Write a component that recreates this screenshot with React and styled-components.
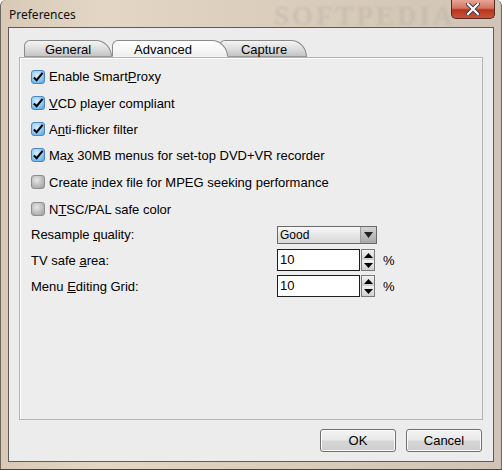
import React from 'react';
import styled, { createGlobalStyle } from 'styled-components';

const Global = createGlobalStyle`
	html, body {
		margin: 0;
		padding: 0;
		background: #ffffff;
	}
	body {
		font-family: 'Liberation Sans', Arial, sans-serif;
		font-size: 13px;
		color: #000;
	}
`;

const checks = [
	{ label: ['Enable Smart', 'P', 'roxy'], checked: true, h: 27 },
	{ label: ['', 'V', 'CD player compliant'], checked: true, h: 26 },
	{ label: ['A', 'n', 'ti-flicker filter'], checked: true, h: 26 },
	{ label: ['Ma', 'x', ' 30MB menus for set-top DVD+VR recorder'], checked: true, h: 26 },
	{ label: ['Create ', 'i', 'ndex file for MPEG seeking performance'], checked: false, h: 28 },
	{ label: ['N', 'T', 'SC/PAL safe color'], checked: false, h: 26 },
];

const Label = ({ parts }) => (
	<span>
		{parts[0]}
		<u>{parts[1]}</u>
		{parts[2]}
	</span>
);

const SpinControl = () => (
	<Spinner>
		<SpinInput>10</SpinInput>
		<SpinButtons>
			<SpinHalf>
				<svg width="9" height="5" viewBox="0 0 9 5">
					<path d="M0 5 H9 L4.5 0 Z" fill="#000" />
				</svg>
			</SpinHalf>
			<SpinHalf>
				<svg width="9" height="5" viewBox="0 0 9 5">
					<path d="M0 0 H9 L4.5 5 Z" fill="#000" />
				</svg>
			</SpinHalf>
		</SpinButtons>
	</Spinner>
);

const App = () => {
	return (
		<>
			<Global />
			<Window>
				<TitleBar>
					<Title>Preferences</Title>
					<Watermark>SOFTPEDIA</Watermark>
					<CloseButton>
						<svg width="14" height="12" viewBox="0 0 14 12">
							<path
								d="M2 1 L12 11 M12 1 L2 11"
								stroke="#3a3a4a"
								strokeWidth="4"
								strokeLinecap="round"
							/>
							<path
								d="M2 1 L12 11 M12 1 L2 11"
								stroke="#ffffff"
								strokeWidth="2.2"
								strokeLinecap="round"
							/>
						</svg>
					</CloseButton>
				</TitleBar>
				<Client>
					<TabRow>
						<Tab>General</Tab>
						<Tab $active>Advanced</Tab>
						<Tab $last>Capture</Tab>
					</TabRow>
					<Panel>
						{checks.map((c, i) => (
							<CheckRow key={i} $h={c.h}>
								<Box $checked={c.checked}>
									{c.checked && (
										<svg width="13" height="12" viewBox="0 0 13 12">
											<path
												d="M2 6.5 L5 9.5 L11.5 1.5"
												stroke="#000"
												strokeWidth="2.2"
												fill="none"
											/>
										</svg>
									)}
								</Box>
								<Label parts={c.label} />
							</CheckRow>
						))}
						<FieldRow $h={25}>
							<FieldLabel>
								Resample <u>q</u>uality:
							</FieldLabel>
							<Combo>
								<ComboText>Good</ComboText>
								<ComboButton>
									<svg width="9" height="6" viewBox="0 0 9 6">
										<path d="M0 0 H9 L4.5 6 Z" fill="#222" />
									</svg>
								</ComboButton>
							</Combo>
						</FieldRow>
						<FieldRow $h={26}>
							<FieldLabel>
								TV safe <u>a</u>rea:
							</FieldLabel>
							<SpinControl />
							<Percent>%</Percent>
						</FieldRow>
						<FieldRow $h={26}>
							<FieldLabel>
								Menu <u>E</u>diting Grid:
							</FieldLabel>
							<SpinControl />
							<Percent>%</Percent>
						</FieldRow>
					</Panel>
					<ButtonRow>
						<Button>OK</Button>
						<Button>Cancel</Button>
					</ButtonRow>
				</Client>
			</Window>
		</>
	);
};

const Window = styled.div`
	width: 502px;
	height: 470px;
	box-sizing: border-box;
	display: flex;
	flex-direction: column;
	padding: 0 7px 7px 7px;
	background: linear-gradient(90deg, #d8cab6 0%, #e3d6c5 20%, #d9ccbb 60%, #cfc4b6 100%);
	border-left: 1px solid #6e665c;
	border-right: 1px solid #6e665c;
	border-bottom: 1px solid #4a453f;
	border-radius: 6px 6px 0 0;
	overflow: hidden;
`;

const TitleBar = styled.div`
	height: 28px;
	position: relative;
	display: flex;
	align-items: center;
`;

const Title = styled.div`
	font-family: 'Noto Sans', 'Liberation Sans', sans-serif;
	font-size: 12px;
	color: #101010;
	padding-left: 1px;
	margin-top: 1px;
`;

const Watermark = styled.div`
	position: absolute;
	left: 266px;
	top: 1px;
	font-family: 'Liberation Serif', serif;
	font-weight: bold;
	font-size: 27px;
	letter-spacing: 3px;
	color: rgba(185, 175, 160, 0.4);
	filter: blur(1px);
`;

const CloseButton = styled.div`
	position: absolute;
	right: -1px;
	top: 0;
	width: 44px;
	height: 19px;
	box-sizing: border-box;
	border: 1px solid #5a2a22;
	border-top: none;
	border-radius: 0 0 5px 5px;
	background: linear-gradient(180deg, #e8a496 0%, #d2765f 45%, #b8341c 55%, #c9533a 100%);
	display: flex;
	align-items: center;
	justify-content: center;
`;

const Client = styled.div`
	flex: 1;
	display: flex;
	flex-direction: column;
	border: 1px solid #5c5c5c;
	background: #ececec;
	padding: 12px 10px 9px 10px;
`;

const TabRow = styled.div`
	display: flex;
	height: 17px;
	padding-left: 5px;
	align-items: flex-end;
`;

const Tab = styled.div`
	height: 17px;
	box-sizing: border-box;
	width: ${(p) => (p.$active ? '116px' : '88px')};
	margin-right: ${(p) => (p.$active ? '-9px' : '0')};
	position: relative;
	z-index: ${(p) => (p.$active ? 2 : 1)};
	padding: ${(p) => (p.$active ? '2px 14px 0 0' : p.$last ? '2px 0 0 2px' : '2px 0 0 0')};
	display: flex;
	align-items: center;
	justify-content: center;
	font-size: 13px;
	line-height: 13px;
	border: 1px solid #8a8a8a;
	border-bottom: ${(p) => (p.$active ? '1px solid #f4f4f4' : '1px solid #9a9a9a')};
	border-radius: 6px 16px 0 0 / 6px 17px 0 0;
	background: ${(p) =>
		p.$active
			? 'linear-gradient(180deg, #ffffff 0%, #f6f6f6 60%, #eeeeee 100%)'
			: 'linear-gradient(180deg, #f4f4f4 0%, #dcdcdc 55%, #c4c4c4 100%)'};
`;

const Panel = styled.div`
	height: 363px;
	box-sizing: border-box;
	border: 1px solid #b4b4b4;
	box-shadow: inset 1px 1px 0 #ffffff;
	background: #ededed;
	padding: 5px 10px 0 11px;
	display: flex;
	flex-direction: column;
`;

const CheckRow = styled.div`
	height: ${(p) => p.$h}px;
	display: flex;
	align-items: center;
	gap: 4px;
	white-space: nowrap;
`;

const Box = styled.div`
	width: 14px;
	height: 14px;
	box-sizing: border-box;
	border-radius: 3px;
	display: flex;
	align-items: center;
	justify-content: center;
	border: 1px solid ${(p) => (p.$checked ? '#4f84c4' : '#8e8e8e')};
	background: ${(p) =>
		p.$checked
			? 'radial-gradient(circle at 40% 35%, #d8f0ff 0%, #8ccaf4 55%, #4aa0e0 100%)'
			: 'radial-gradient(circle at 40% 35%, #e8e8e8 0%, #b8b8b8 60%, #9c9c9c 100%)'};
`;

const FieldRow = styled.div`
	height: ${(p) => p.$h}px;
	display: flex;
	align-items: center;
	white-space: nowrap;
`;

const FieldLabel = styled.div`
	width: 246px;
`;

const Combo = styled.div`
	width: 100px;
	height: 18px;
	box-sizing: border-box;
	border: 1px solid #6a6a6a;
	display: flex;
	background: linear-gradient(180deg, #f8f8f8 0%, #e6e6e6 50%, #d8d8d8 100%);
`;

const ComboText = styled.div`
	flex: 1;
	font-size: 12px;
	line-height: 16px;
	padding-left: 2px;
`;

const ComboButton = styled.div`
	width: 15px;
	display: flex;
	align-items: center;
	justify-content: center;
	border-left: 1px solid #9a9a9a;
	background: linear-gradient(180deg, #d4d4d4 0%, #a8a8a8 100%);
`;

const Spinner = styled.div`
	display: flex;
	height: 22px;
`;

const SpinInput = styled.div`
	width: 83px;
	box-sizing: border-box;
	border: 1px solid #1e1e1e;
	background: #ffffff;
	font-size: 13px;
	line-height: 20px;
	padding-left: 2px;
`;

const SpinButtons = styled.div`
	width: 14px;
	margin-left: 1px;
	display: flex;
	flex-direction: column;
	border: 1px solid #7a7a7a;
	box-sizing: border-box;
`;

const SpinHalf = styled.div`
	flex: 1;
	display: flex;
	align-items: center;
	justify-content: center;
	background: linear-gradient(180deg, #f2f2f2 0%, #cfcfcf 100%);
`;

const Percent = styled.div`
	margin-left: 8px;
	font-size: 13px;
`;

const ButtonRow = styled.div`
	display: flex;
	justify-content: flex-end;
	gap: 10px;
	margin-top: 9px;
	padding-right: 1px;
`;

const Button = styled.div`
	width: 76px;
	height: 23px;
	box-sizing: border-box;
	border: 1px solid #707070;
	border-radius: 3px;
	background: linear-gradient(180deg, #f4f4f4 0%, #e8e8e8 48%, #d6d6d6 52%, #cdcdcd 100%);
	display: flex;
	align-items: center;
	justify-content: center;
	font-size: 13px;
	box-shadow: inset 0 0 0 1px #fbfbfb;
`;

export default App;
